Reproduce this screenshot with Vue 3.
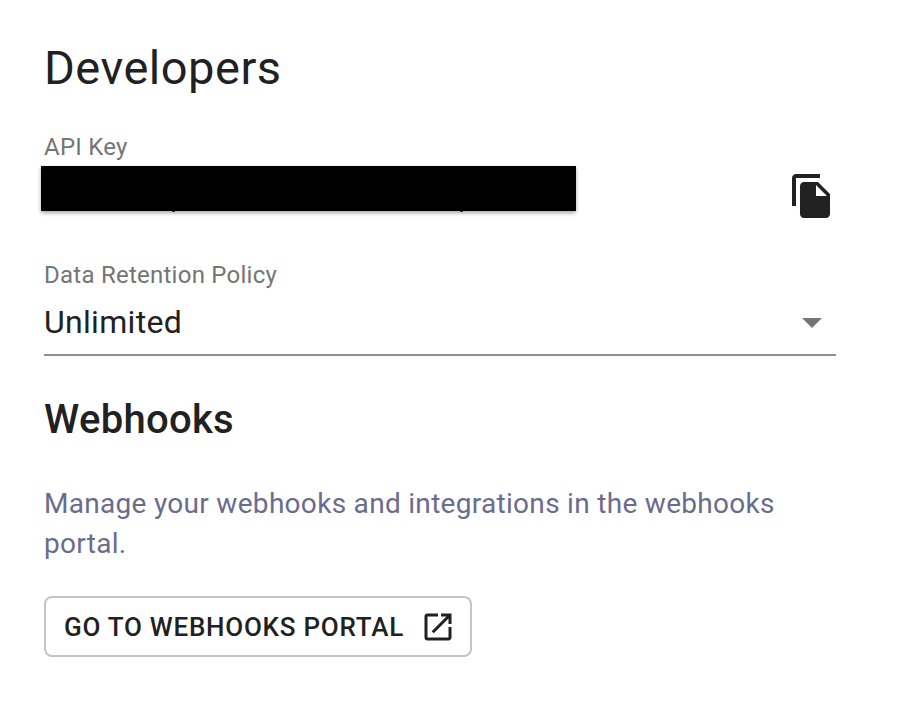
<script setup>
const title = 'Developers'
</script>

<template>
  <main class="page">
    <h1 class="title">{{ title }}</h1>

    <section class="field key-field">
      <label class="label">API Key</label>
      <div class="key-row">
        <div class="key-value">
          <div class="redaction"><i class="tick t1"></i><i class="tick t2"></i></div>
        </div>
        <svg class="copy" viewBox="0 0 24 24" aria-hidden="true">
          <path fill="#212121" d="M16 1H4c-1.1 0-2 .9-2 2v14h2V3h12V1zm-1 4l6 6v10c0 1.1-.9 2-2 2H7.99C6.89 23 6 22.1 6 21l.01-14c0-1.1.89-2 1.99-2h7zm-1 7h5.5L14 6.5V12z"/>
        </svg>
      </div>
    </section>

    <section class="field select-field">
      <label class="label">Data Retention Policy</label>
      <div class="select">
        <span>Unlimited</span>
        <svg class="caret" viewBox="0 0 24 24" aria-hidden="true"><path fill="#757575" d="M7 10l5 5 5-5z"/></svg>
      </div>
    </section>

    <h2 class="subtitle">Webhooks</h2>
    <p class="desc">Manage your webhooks and integrations in the webhooks portal.</p>

    <button class="portal" type="button">
      <span>GO TO WEBHOOKS PORTAL</span>
      <svg class="open" viewBox="0 0 24 24" aria-hidden="true">
        <path fill="#212121" d="M19 19H5V5h7V3H5a2 2 0 0 0-2 2v14a2 2 0 0 0 2 2h14c1.1 0 2-.9 2-2v-7h-2v7zM14 3v2h3.59l-9.83 9.83 1.41 1.41L19 6.41V10h2V3h-7z"/>
      </svg>
    </button>
  </main>
</template>

<style scoped>
.page {
  box-sizing: border-box;
  width: 900px;
  height: 718px;
  padding: 38px 64px 0 44px;
  font-family: Roboto, "Liberation Sans", sans-serif;
  color: #212121;
  background: #fff;
  overflow: hidden;
}
.title {
  margin: 0;
  font-size: 47px;
  line-height: 60px;
  font-weight: 400;
  letter-spacing: 0.5px;
}
.field { width: 792px; }
.key-field { margin-top: 34px; }
.label {
  display: block;
  font-size: 24px;
  line-height: 30px;
  letter-spacing: 0.25px;
  color: #757575;
}
.key-row {
  display: flex;
  justify-content: space-between;
  height: 50px;
}
.key-value { position: relative; width: 500px; }
.redaction {
  position: absolute;
  left: -3px;
  top: 4px;
  width: 535px;
  height: 45px;
  background: #000;
  box-shadow: 0 2px 4px rgba(0, 0, 0, 0.35);
}
.tick {
  position: absolute;
  top: 45px;
  width: 3px;
  height: 1px;
  background: #333;
}
.t1 { left: 131px; }
.t2 { left: 419px; }
.copy {
  width: 48px;
  height: 48px;
  margin: 10px 0 0 0;
  flex: none;
}
.select-field { margin-top: 48px; }
.select {
  display: flex;
  justify-content: space-between;
  align-items: center;
  height: 64px;
  font-size: 32px;
  letter-spacing: 0.3px;
  border-bottom: 2px solid #8f8f8f;
  box-sizing: content-box;
}
.caret {
  width: 48px;
  height: 48px;
  flex: none;
}
.subtitle {
  margin: 39px 0 0;
  font-size: 40px;
  line-height: 50px;
  font-weight: 500;
  letter-spacing: 0.3px;
}
.desc {
  width: 760px;
  margin: 39px 0 0;
  font-size: 28px;
  line-height: 40px;
  letter-spacing: 0.3px;
  color: #6b6b8d;
}
.portal {
  display: flex;
  align-items: center;
  justify-content: space-between;
  box-sizing: border-box;
  width: 428px;
  height: 61px;
  margin-top: 32px;
  padding: 0 14px 0 18px;
  background: #fff;
  border: 2px solid #c4c4c4;
  border-radius: 8px;
  font-family: inherit;
  font-size: 26px;
  font-weight: 500;
  letter-spacing: 0.75px;
  color: #212121;
  white-space: nowrap;
}
.open {
  width: 36px;
  height: 36px;
  flex: none;
}
</style>
